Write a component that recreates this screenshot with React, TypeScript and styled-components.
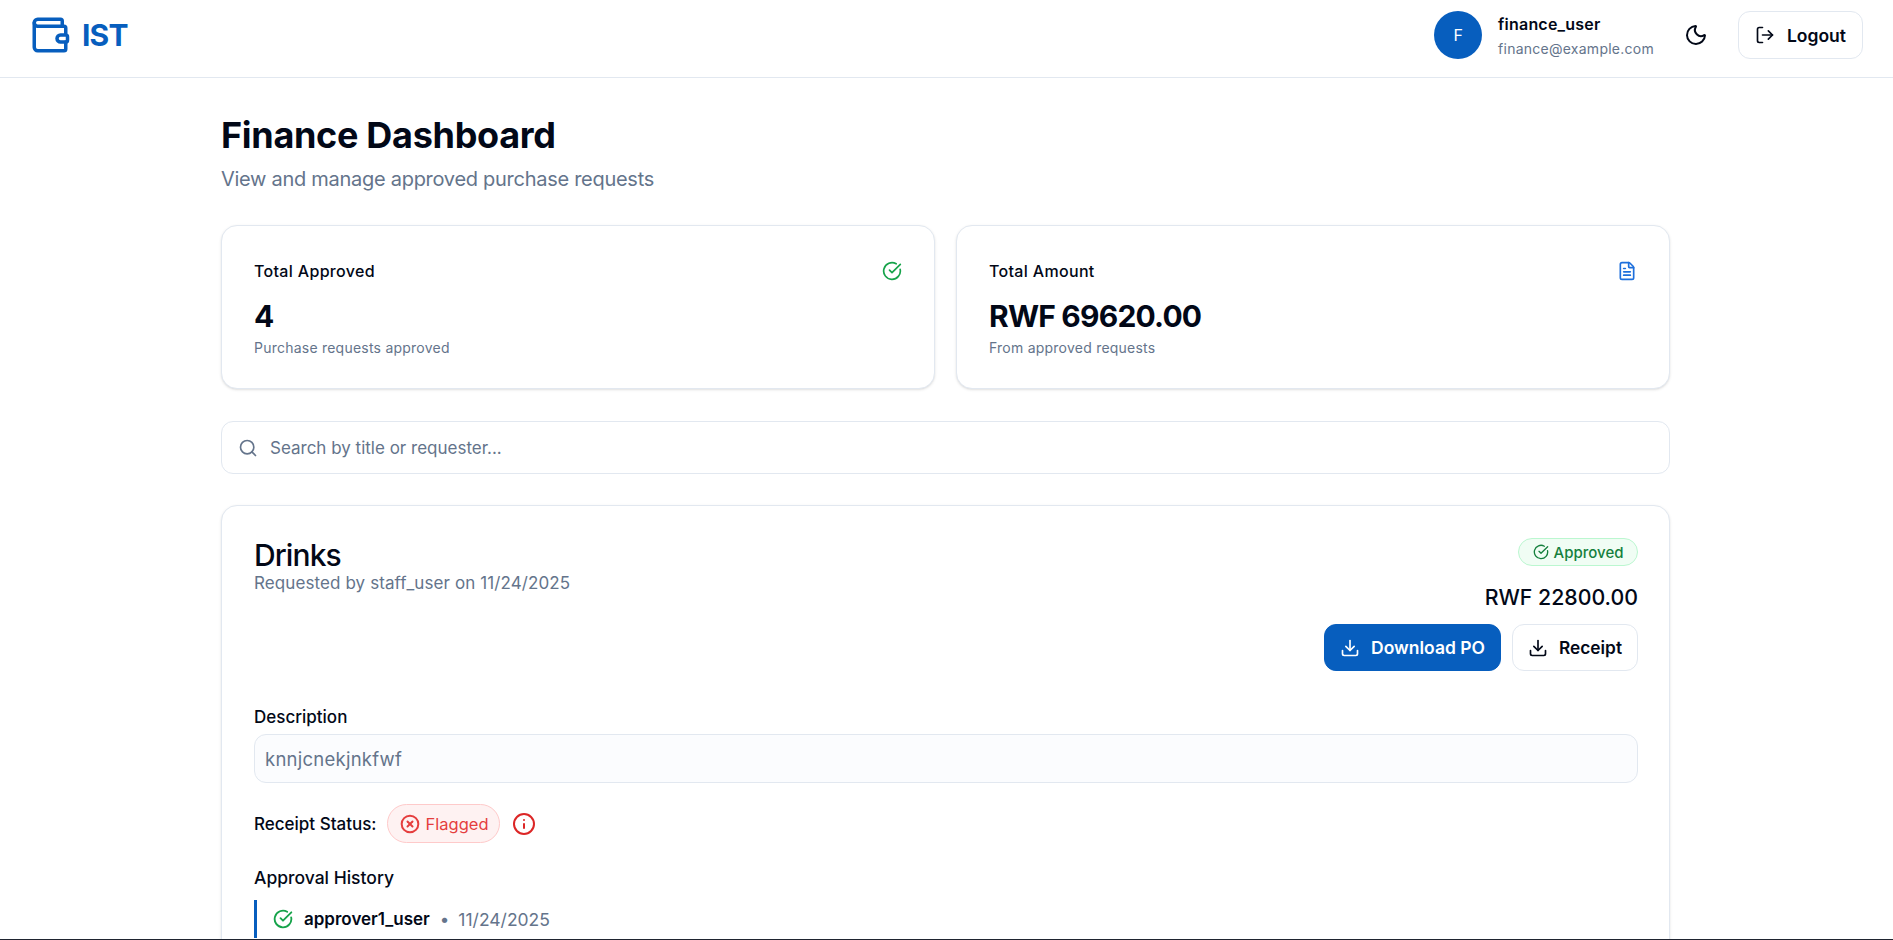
import styled, {createGlobalStyle} from "styled-components";
import {
  CircleCheckBig,
  CircleX,
  Download,
  FileText,
  Info,
  LogOut,
  Moon,
  Search,
  Wallet,
} from "lucide-react";

const GlobalStyle = createGlobalStyle`
    html, body {
        margin: 0;
        padding: 0;
        background: #ffffff;
        font-family: "Inter", "Noto Sans", sans-serif;
        color: #020817;
    }

    * {
        box-sizing: border-box;
    }
`;

const Page = styled.div`
    height: 940px;
    overflow: hidden;
    border-bottom: 1px solid #1f2430;
`;

const NavBar = styled.header`
    display: flex;
    align-items: center;
    justify-content: space-between;
    height: 78px;
    padding: 0 30px 7px 29px;
    border-bottom: 1px solid #e2e8f0;
`;

const Brand = styled.div`
    display: flex;
    align-items: center;
    gap: 11px;
    color: #075ebe;
    font-size: 30px;
    font-weight: 700;
    letter-spacing: -0.8px;
`;

const NavRight = styled.div`
    display: flex;
    align-items: center;
`;

const Avatar = styled.div`
    display: flex;
    align-items: center;
    justify-content: center;
    width: 48px;
    height: 48px;
    border-radius: 50%;
    background: #075ebe;
    color: #ffffff;
    font-size: 16px;
    margin-right: 16px;
`;

const UserBlock = styled.div`
    display: flex;
    flex-direction: column;
    gap: 3px;
    margin-right: 30px;
`;

const UserName = styled.div`
    font-size: 16px;
    line-height: 24px;
    font-weight: 600;
    letter-spacing: 0.2px;
`;

const UserMail = styled.div`
    font-size: 14px;
    line-height: 20px;
    letter-spacing: 0.25px;
    color: #64748b;
`;

const ThemeToggle = styled.button`
    display: flex;
    align-items: center;
    justify-content: center;
    width: 24px;
    height: 24px;
    padding: 0;
    margin-right: 30px;
    border: 0;
    background: none;
    color: #020817;
`;

const OutlineButton = styled.button`
    display: inline-flex;
    align-items: center;
    justify-content: center;
    gap: 12px;
    height: 48px;
    padding: 0 16px;
    border: 1px solid #e2e8f0;
    border-radius: 12px;
    background: #ffffff;
    color: #020817;
    font-family: inherit;
    font-size: 17.5px;
    font-weight: 600;
`;

const ReceiptButton = styled(OutlineButton)`
    gap: 11px;
    height: 47px;
    padding: 0 15px;
    font-size: 17.3px;
`;

const PrimaryButton = styled(ReceiptButton)`
    border-color: #075ebe;
    background: #075ebe;
    color: #ffffff;
    font-size: 17.5px;
`;

const Main = styled.main`
    width: 1449px;
    margin-left: 221px;
    padding-top: 37px;
`;

const Title = styled.h1`
    margin: 0;
    font-size: 36px;
    line-height: 40px;
    font-weight: 700;
    letter-spacing: -0.3px;
`;

const Subtitle = styled.p`
    margin: 10px 0 0;
    font-size: 20px;
    line-height: 28px;
    letter-spacing: -0.28px;
    color: #64748b;
`;

const StatGrid = styled.div`
    display: grid;
    grid-template-columns: 1fr 1fr;
    gap: 21px;
    margin-top: 32px;
`;

const Card = styled.section`
    border: 1px solid #e2e8f0;
    border-radius: 16px;
    background: #ffffff;
    box-shadow: 0 1px 3px rgba(0, 0, 0, 0.1), 0 1px 2px -1px rgba(0, 0, 0, 0.1);
`;

const StatCard = styled(Card)`
    height: 164px;
    padding: 33px 32px;
`;

const StatHead = styled.div`
    display: flex;
    align-items: center;
    justify-content: space-between;
    height: 24px;
    font-size: 16px;
    font-weight: 500;
    letter-spacing: 0.33px;
`;

const StatValue = styled.div`
    margin-top: 15px;
    font-size: 30px;
    line-height: 36px;
    font-weight: 700;
    letter-spacing: -0.8px;
`;

const StatNote = styled.div`
    font-size: 14px;
    line-height: 20px;
    margin-top: 4px;
    letter-spacing: 0.23px;
    color: #64748b;
`;

const SearchBox = styled.div`
    display: flex;
    align-items: center;
    gap: 12px;
    height: 53px;
    margin-top: 32px;
    padding: 0 16px;
    border: 1px solid #e2e8f0;
    border-radius: 12px;
    color: #64748b;
`;

const SearchInput = styled.input`
    flex: 1;
    border: 0;
    outline: none;
    padding: 0;
    background: none;
    font-family: inherit;
    font-size: 17px;

    &::placeholder {
        color: #64748b;
        opacity: 1;
    }
`;

const RequestCard = styled(Card)`
    margin-top: 31px;
    padding: 32px 31px 32px 32px;
`;

const RequestHead = styled.div`
    display: flex;
    justify-content: space-between;
    align-items: flex-start;
`;

const RequestTitle = styled.h2`
    margin: 1px 0 0;
    font-size: 30px;
    line-height: 32px;
    font-weight: 500;
    letter-spacing: -0.9px;
`;

const RequestMeta = styled.div`
    margin-top: 2px;
    font-size: 17px;
    line-height: 20px;
    letter-spacing: 0.1px;
    color: #64748b;
`;

const RequestSide = styled.div`
    display: flex;
    flex-direction: column;
    align-items: flex-end;
`;

const ApprovedBadge = styled.div`
    display: inline-flex;
    align-items: center;
    gap: 5px;
    height: 28px;
    padding: 0 13.5px;
    border: 1px solid #bbf7d0;
    border-radius: 999px;
    background: #f0fdf4;
    color: #15803d;
    font-size: 15px;
    font-weight: 500;
`;

const RequestAmount = styled.div`
    margin-top: 17px;
    font-size: 21.3px;
    line-height: 28px;
    font-weight: 500;
`;

const ButtonRow = styled.div`
    display: flex;
    gap: 11px;
    margin-top: 13px;
`;

const Label = styled.div`
    font-size: 17px;
    line-height: 24px;
    font-weight: 500;
`;

const DescriptionLabel = styled(Label)`
    margin-top: 34px;
`;

const DescriptionBox = styled.div`
    display: flex;
    align-items: center;
    height: 49px;
    margin-top: 5px;
    padding: 0 10px;
    border: 1px solid #e2e8f0;
    border-radius: 12px;
    background: #fbfcfe;
    color: #64748b;
    font-size: 18.5px;
    letter-spacing: 0.25px;
`;

const ReceiptRow = styled.div`
    display: flex;
    align-items: center;
    margin-top: 21px;
`;

const ReceiptLabel = styled(Label)`
    margin-right: 10px;
`;

const FlaggedBadge = styled.div`
    display: inline-flex;
    align-items: center;
    gap: 6px;
    height: 39px;
    padding: 0 11px 0 12px;
    border: 1px solid #fecaca;
    border-radius: 999px;
    background: #fef2f2;
    color: #e53e3e;
    font-size: 16.5px;
    margin-right: 12px;
`;

const InfoButton = styled.span`
    display: inline-flex;
    color: #dc2626;
`;

const HistoryLabel = styled(Label)`
    margin-top: 23px;
    font-size: 17.5px;
`;

const HistoryItem = styled.div`
    display: flex;
    align-items: center;
    height: 38px;
    margin-top: 10px;
    padding-left: 16px;
    border-left: 3px solid #075ebe;
    font-size: 17px;
`;

const HistoryUser = styled.span`
    margin-left: 11px;
    font-weight: 600;
`;

const HistoryDot = styled.span`
    margin: 0 9px 0 10px;
    color: #64748b;
`;

const HistoryDate = styled.span`
    font-size: 17.5px;
    color: #64748b;
`;

export default function App() {
  return (
    <Page>
      <GlobalStyle/>
      <NavBar>
        <Brand>
          <Wallet size={42} color="#075ebe"/>
          IST
        </Brand>
        <NavRight>
          <Avatar>F</Avatar>
          <UserBlock>
            <UserName>finance_user</UserName>
            <UserMail>finance@example.com</UserMail>
          </UserBlock>
          <ThemeToggle><Moon size={24}/></ThemeToggle>
          <OutlineButton><LogOut size={20}/>Logout</OutlineButton>
        </NavRight>
      </NavBar>

      <Main>
        <Title>Finance Dashboard</Title>
        <Subtitle>View and manage approved purchase requests</Subtitle>

        <StatGrid>
          <StatCard>
            <StatHead>
              Total Approved
              <CircleCheckBig size={20} color="#16a34a"/>
            </StatHead>
            <StatValue>4</StatValue>
            <StatNote>Purchase requests approved</StatNote>
          </StatCard>
          <StatCard>
            <StatHead>
              Total Amount
              <FileText size={20} color="#1d6fdc"/>
            </StatHead>
            <StatValue>RWF 69620.00</StatValue>
            <StatNote>From approved requests</StatNote>
          </StatCard>
        </StatGrid>

        <SearchBox>
          <Search size={20}/>
          <SearchInput placeholder="Search by title or requester..."/>
        </SearchBox>

        <RequestCard>
          <RequestHead>
            <div>
              <RequestTitle>Drinks</RequestTitle>
              <RequestMeta>Requested by staff_user on 11/24/2025</RequestMeta>
            </div>
            <RequestSide>
              <ApprovedBadge><CircleCheckBig size={16}/>Approved</ApprovedBadge>
              <RequestAmount>RWF 22800.00</RequestAmount>
              <ButtonRow>
                <PrimaryButton><Download size={20}/>Download PO</PrimaryButton>
                <ReceiptButton><Download size={20}/>Receipt</ReceiptButton>
              </ButtonRow>
            </RequestSide>
          </RequestHead>

          <DescriptionLabel>Description</DescriptionLabel>
          <DescriptionBox>knnjcnekjnkfwf</DescriptionBox>

          <ReceiptRow>
            <ReceiptLabel>Receipt Status:</ReceiptLabel>
            <FlaggedBadge><CircleX size={20} strokeWidth={2.4}/>Flagged</FlaggedBadge>
            <InfoButton><Info size={24}/></InfoButton>
          </ReceiptRow>

          <HistoryLabel>Approval History</HistoryLabel>
          <HistoryItem>
            <CircleCheckBig size={20} strokeWidth={2.2} color="#16a34a"/>
            <HistoryUser>approver1_user</HistoryUser>
            <HistoryDot>•</HistoryDot>
            <HistoryDate>11/24/2025</HistoryDate>
          </HistoryItem>
        </RequestCard>
      </Main>
    </Page>
  );
}
